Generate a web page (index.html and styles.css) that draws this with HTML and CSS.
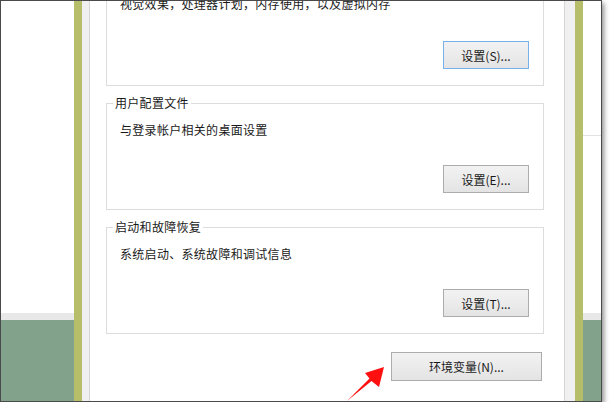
FILE: index.html
```html
<!DOCTYPE html>
<html lang="zh-CN">
<head>
<meta charset="utf-8">
<title>系统属性 - 高级</title>
<link rel="stylesheet" href="styles.css">
</head>
<body>
<div class="screen">
  <div class="desk">
    <div class="desk-white"></div>
    <div class="desk-band"></div>
    <div class="desk-green"></div>
  </div>
  <div class="frame"></div>
  <div class="pad pad-left"></div>
  <div class="page">
    <div class="group group-first">
      <p class="desc desc-first">视觉效果，处理器计划，内存使用，以及虚拟内存</p>
      <div class="btn-row"><button class="btn btn-focus">设置(S)...</button></div>
    </div>
    <fieldset class="group">
      <legend>用户配置文件</legend>
      <p class="desc">与登录帐户相关的桌面设置</p>
      <div class="btn-row"><button class="btn">设置(E)...</button></div>
    </fieldset>
    <fieldset class="group">
      <legend>启动和故障恢复</legend>
      <p class="desc">系统启动、系统故障和调试信息</p>
      <div class="btn-row"><button class="btn">设置(T)...</button></div>
    </fieldset>
    <div class="env-row"><button class="btn btn-env">环境变量(N)...</button></div>
  </div>
  <div class="pad pad-right"></div>
  <div class="frame"></div>
  <div class="desk desk-right">
    <div class="desk-white"></div>
    <div class="desk-band"></div>
    <div class="desk-green"></div>
  </div>
  <svg class="arrow" viewBox="340 360 50 45" width="50" height="45">
    <polygon points="384,367 365,373 369.5,378.5 347,401 371.5,381 379,387" fill="#ff1010"/>
  </svg>
</div>
</body>
</html>
```
FILE: styles.css
```css
html, body {
  margin: 0;
  padding: 0;
  background: #ffffff;
}

.screen {
  position: relative;
  display: flex;
  width: 600px;
  height: 400px;
  border: 1px solid #4a4a4a;
  box-shadow: 2px 3px 5px rgba(0, 0, 0, 0.45);
  overflow: hidden;
  font-family: "Noto Sans CJK SC", "Noto Sans", sans-serif;
  font-size: 12px;
  color: #1a1a1a;
}

.desk {
  width: 73px;
  display: flex;
  flex-direction: column;
  flex: none;
}

.desk-right {
  width: 18px;
}

.desk-white {
  height: 312px;
  background: #ffffff;
}

.desk-right .desk-white {
  background: linear-gradient(#ffffff 134px, #e2e2e2 134px, #e2e2e2 135px, #ffffff 135px);
}

.desk-band {
  height: 7px;
  background: #e8e8e8;
}

.desk-green {
  flex: 1;
  background: #83a28b;
}

.frame {
  width: 8px;
  flex: none;
  background: #b6be6a;
}

.pad {
  flex: none;
  background: #f0f0f0;
}

.pad-left {
  width: 7px;
  border-right: 1px solid #d6d6d6;
}

.pad-right {
  width: 10px;
  border-left: 1px solid #d6d6d6;
}

.page {
  width: 474px;
  flex: none;
  background: #ffffff;
  overflow: hidden;
}

.group {
  margin: 10px 20px 0 16px;
  padding: 0;
  border: 1px solid #dcdcdc;
  min-width: 0;
}

.group-first {
  margin-top: 0;
  border-top: none;
}

.group legend {
  margin-left: 6px;
  padding: 0 2px;
  line-height: 14px;
  letter-spacing: 0.3px;
  color: #1a1a1a;
}

.desc {
  margin: 12px 0 0 13px;
  line-height: 16px;
  letter-spacing: 0.3px;
  white-space: nowrap;
}

.desc-first {
  margin-top: -5px;
}

.btn-row {
  display: flex;
  justify-content: flex-end;
  padding: 27px 14px 16px 0;
}

.group-first .btn-row {
  padding-top: 29px;
}

.btn {
  box-sizing: border-box;
  width: 86px;
  height: 28px;
  padding: 0;
  border: 1px solid #acacac;
  border-radius: 0;
  background: linear-gradient(#f2f2f2, #e4e4e4);
  font-family: "Noto Sans CJK SC", "Noto Sans", sans-serif;
  font-size: 12px;
  color: #1a1a1a;
}

.btn-focus {
  border-color: #78b0ea;
}

.env-row {
  display: flex;
  justify-content: flex-end;
  padding: 18px 22px 0 0;
}

.btn-env {
  width: 151px;
  height: 29px;
}

.arrow {
  position: absolute;
  left: 339px;
  top: 359px;
  pointer-events: none;
}
```
